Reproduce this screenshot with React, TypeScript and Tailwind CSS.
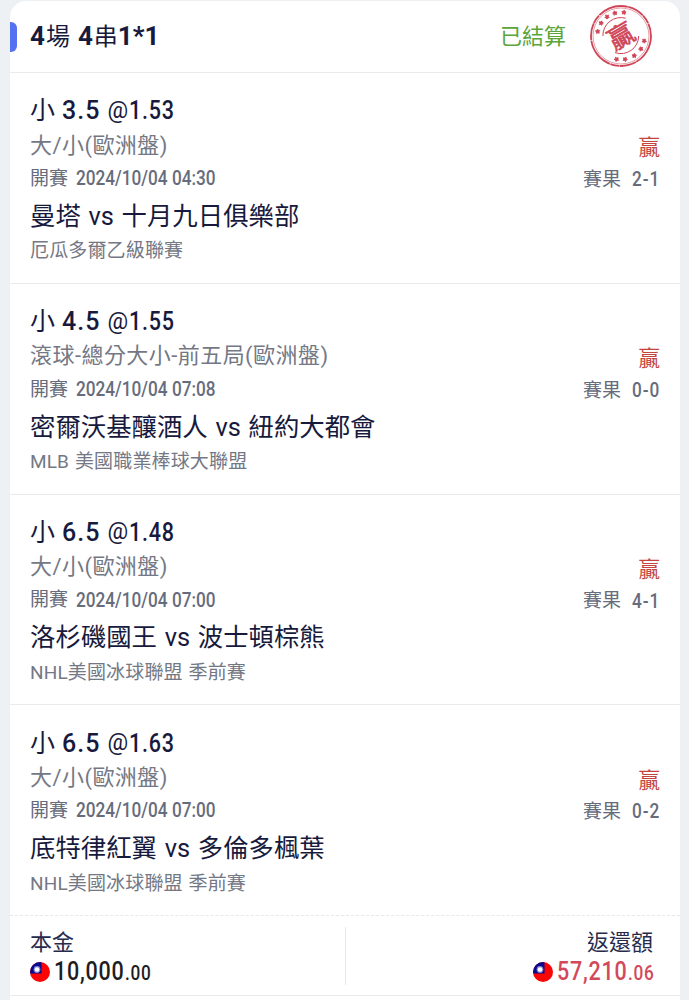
const bets = [
  {
    line: "3.5",
    odds: "1.53",
    market: "大/小(歐洲盤)",
    time: "2024/10/04 04:30",
    teams: "曼塔 vs 十月九日俱樂部",
    league: "厄瓜多爾乙級聯賽",
    score: "2-1",
  },
  {
    line: "4.5",
    odds: "1.55",
    market: "滾球-總分大小-前五局(歐洲盤)",
    time: "2024/10/04 07:08",
    teams: "密爾沃基釀酒人 vs 紐約大都會",
    league: "MLB 美國職業棒球大聯盟",
    score: "0-0",
  },
  {
    line: "6.5",
    odds: "1.48",
    market: "大/小(歐洲盤)",
    time: "2024/10/04 07:00",
    teams: "洛杉磯國王 vs 波士頓棕熊",
    league: "NHL美國冰球聯盟 季前賽",
    score: "4-1",
  },
  {
    line: "6.5",
    odds: "1.63",
    market: "大/小(歐洲盤)",
    time: "2024/10/04 07:00",
    teams: "底特律紅翼 vs 多倫多楓葉",
    league: "NHL美國冰球聯盟 季前賽",
    score: "0-2",
  },
];

const star = "M0-2.3.8-.9 2.2-.6 1.3.5 1.4 1.9 0 1.4-1.4 1.9-1.3.5-2.2-.6-.8-.9Z";

const WinStamp = () => {
  // stars sit on two opposite arcs of the ring
  const angles = [191, 213, 234, 255, 277, 12, 33, 56, 80, 101];
  return (
    <svg viewBox="0 0 64 64" className="h-16 w-16 shrink-0" fill="none" stroke="#cf4457">
      <circle cx="32" cy="32" r="30" strokeWidth="1.8" strokeDasharray="31 .5 17 .4 9 .6" />
      <circle cx="32" cy="32" r="28" strokeWidth="0.7" opacity="0.75" />
      <path d="M13.9 32A18 18 0 0 1 36.7 14.2" strokeWidth="1" />
      <path d="M49.7 32A17.8 17.8 0 0 1 26 48.6" strokeWidth="1" />
      {angles.map((a) => (
        <path
          key={a}
          d={star}
          fill="#cf4457"
          strokeWidth="0.8"
          transform={`rotate(${a} 32 32) translate(55.8 32) rotate(90)`}
        />
      ))}
      <text
        x="32"
        y="41.5"
        textAnchor="middle"
        transform="rotate(-30 32 32)"
        fill="#cf4457"
        strokeWidth="0.6"
        className="text-[26px]"
      >
        贏
      </text>
    </svg>
  );
};

const Flag = () => (
  <svg viewBox="0 0 20 20" className="h-5 w-5 shrink-0">
    <clipPath id="round">
      <circle cx="10" cy="10" r="10" />
    </clipPath>
    <g clipPath="url(#round)">
      <rect width="20" height="20" fill="#fb0505" />
      <rect width="11.5" height="11.5" fill="#0a0a8f" />
      <circle cx="7" cy="7.5" r="3.4" fill="#7f86cf" />
      <circle cx="7" cy="7.5" r="2.3" fill="#fff" />
    </g>
  </svg>
);

const Digits = ({ text, className }: { text: string; className: string }) => (
  <span className={`flex whitespace-nowrap font-medium ${className}`}>
    <span className="origin-left scale-x-[.86]">{text}</span>
  </span>
);

const Amount = ({ whole, cents }: { whole: string; cents: string }) => (
  <div className="flex h-[30px] items-center">
    <Flag />
    <Digits text={whole} className="ml-1 w-[71px] text-[25px] tracking-[0.9px]" />
    <Digits text={cents} className="w-[27px] pt-0.5 text-[20px] tracking-[0.9px]" />
  </div>
);

const BetRow = ({ bet, last }: { bet: (typeof bets)[number]; last: boolean }) => (
  <div
    className={`flex h-[210.75px] justify-between border-b px-5 pt-[19px] ${
      last ? "border-dashed border-[#e6e8ea]" : "border-[#e8eaec]"
    }`}
  >
    <div className="whitespace-nowrap">
      <div className="flex h-9 items-center pt-0.5 text-[25px] text-[#171a3d]">
        <span className="mr-[7px]">小</span>
        <span className="mr-[7px] font-medium tracking-[1px]">{bet.line}</span>
        <span className="mr-px text-[23px] tracking-[-0.5px]">@</span>
        <Digits text={bet.odds} className="tracking-[0.9px]" />
      </div>
      <div className="flex h-[34px] items-center text-[22px] tracking-[0.45px] text-[#747885]">{bet.market}</div>
      <div className="flex h-[34px] items-center text-[19px] text-[#676c7c]">
        <span className="mr-2">開賽</span>
        <Digits text={bet.time} className="pb-0.5 text-[20px]" />
      </div>
      <div className="flex h-10 items-center text-[25.4px] text-[#171a3d] [word-spacing:1.4px]">{bet.teams}</div>
      <div className="flex h-[30px] items-center pt-px text-[19px] tracking-[0.15px] text-[#747885] [word-spacing:1px]">
        {bet.league}
      </div>
    </div>
    <div className="flex flex-col items-end pt-10">
      <div className="flex h-[33px] items-center text-[21.5px] text-[#c2463f]">贏</div>
      <div className="flex h-[30px] items-center text-[19px] text-[#676c7c]">
        <span className="mr-[11px]">賽果</span>
        <Digits text={bet.score} className="w-[28px] pb-0.5 text-[20px] tracking-[1.1px]" />
      </div>
    </div>
  </div>
);

export default function App() {
  return (
    <div className="h-[1000px] w-[689px] overflow-hidden bg-[#eef1f4] pl-2.5 pr-[9px] pt-px font-['Roboto','Noto_Sans_CJK_TC',sans-serif]">
      <div className="h-full rounded-t-2xl bg-white">
        <div className="flex h-[72px] items-center border-b border-[#e8eaec] pr-[27px]">
          <div className="h-[30px] w-[7px] rounded-r-md bg-[#5472f0]" />
          <div className="ml-[13px] flex items-center text-[24px] text-[#171a3d]">
            <span className="mr-px text-[26px] font-bold">4</span>
            <span className="mr-2">場</span>
            <span className="mr-px text-[26px] font-bold">4</span>
            <span>串</span>
            <span className="text-[26px] font-bold">1*1</span>
          </div>
          <div className="ml-auto mr-[23px] text-[22px] text-[#5ba53a]">已結算</div>
          <div className="-mt-px flex">
            <WinStamp />
          </div>
        </div>

        {bets.map((bet, index) => (
          <BetRow key={index} bet={bet} last={index === bets.length - 1} />
        ))}

        <div className="grid h-[80px] grid-cols-[335px_1px_1fr] border-b border-[#e8eaec] pr-[25px] pt-[11px]">
          <div className="pl-5 text-[#1d1d22]">
            <div className="flex h-[30px] items-center text-[22px] text-[#272b4b]">本金</div>
            <Amount whole="10,000" cents=".00" />
          </div>
          <div className="h-[58px] bg-[#e6e8ea]" />
          <div className="flex flex-col items-end text-[#d2495c]">
            <div className="flex h-[30px] items-center pr-0.5 text-[22px] text-[#272b4b]">返還額</div>
            <Amount whole="57,210" cents=".06" />
          </div>
        </div>
      </div>
    </div>
  );
}
